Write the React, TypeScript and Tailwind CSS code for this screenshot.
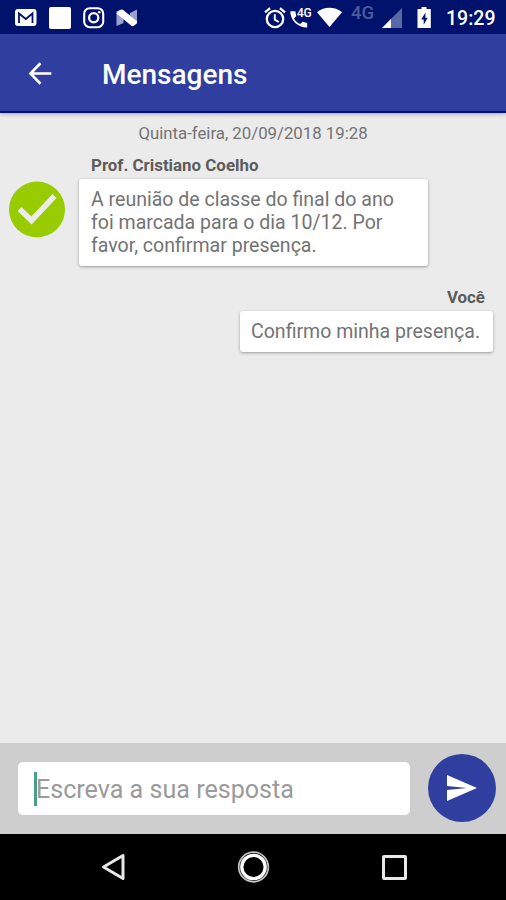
import type { ReactNode } from "react";

function NotificationIcons() {
  return (
    <div className="flex items-center">
      <svg className="h-[18px] w-[22px]" viewBox="0 0 22 18">
        <rect width="21.500" height="17" rx="3" fill="#fff" />
        <path d="M4 14V4.500l6.800 5.500 6.700-5.500V14" fill="none" stroke="#00126b" strokeWidth="1.800" />
      </svg>
      <div className="ml-3 h-[22px] w-[22px] rounded-xs bg-white" />
      <svg className="ml-3 h-[22px] w-[22px]" viewBox="0 0 22 22" fill="none" stroke="#fff">
        <rect x="1.200" y="1.200" width="19" height="19" rx="5.500" strokeWidth="2.100" />
        <circle cx="10.700" cy="10.700" r="4.600" strokeWidth="2.300" />
        <circle cx="16.200" cy="5.300" r="1.300" fill="#fff" stroke="none" />
      </svg>
      <svg className="ml-[11px] h-[18px] w-[22px]" viewBox="0 0 22 18">
        <path d="M.5 2v15l7-3V4zM14 4l7-3.500V15l-7-2z" fill="#9aa1cc" />
        <path d="M.5 4.500Q2 .8 6.500.5L21.300 12.500Q20 16.500 16 17.300z" fill="#fff" />
      </svg>
    </div>
  );
}

function SystemIcons() {
  return (
    <div className="flex items-start">
      <svg className="h-[22px] w-[22px]" viewBox="0 0 22 22" fill="none" stroke="#fff">
        <circle cx="11" cy="12" r="8.200" strokeWidth="2.300" />
        <path d="M1 5.400L6 1.100M21 5.400L16 1.100" strokeWidth="2.200" />
        <path d="M10.800 7.200v5.400l4 2.400" strokeWidth="1.900" />
      </svg>
      <div className="relative ml-[4px] h-[22px] w-[22px]">
        <svg className="h-[22px] w-[20px]" viewBox="0 0 20 22">
          <path
            d="M.3 4.300h5l1 4.800-2.300 2.300c1.600 3 3.700 4.700 6.200 5.600l2.300-2.200 4.700 1.200v4.500C8.500 20.800.3 14 .3 4.300z"
            fill="#fff"
          />
        </svg>
        <span className="absolute top-0 left-[7px] text-[12px] leading-[13px] font-medium tracking-[-0.3px]">
          4G
        </span>
      </div>
      <svg className="ml-[5px] h-[21px] w-[25px]" viewBox="0 0 26 21">
        <path d="M0 5C7.500-1.200 18.500-1.200 26 5L13 20.500z" fill="#fff" />
      </svg>
      <span className="ml-[9px] w-[26px] text-[18.5px] leading-[12px] font-medium text-[#4b5a9c]">
        4G
      </span>
      <svg className="ml-[5px] h-[21px] w-[21px]" viewBox="0 0 21 21">
        <path d="M20 1v20H0z" fill="#5968a6" />
        <path d="M9 12V21H0z" fill="#fff" />
      </svg>
      <svg className="ml-[14px] h-[22px] w-[15px]" viewBox="0 0 15 22">
        <path d="M4.500 0h5v2h4.300v19H.5V2h4z" fill="#fff" />
        <path d="M8.500 5.500l-4.300 7h2.500v5.200l4-7H8.300z" fill="#00126b" />
      </svg>
      <span className="ml-[14px] w-[50px] text-[19.5px] leading-[23px] font-medium whitespace-nowrap">
        19:29
      </span>
    </div>
  );
}

function Header() {
  return (
    <header className="relative z-10 text-white shadow-[0_1px_4px_rgba(0,0,0,0.3)]">
      <div className="flex h-[34px] justify-between bg-[#00126b] pt-[7px] pr-[10px] pl-[15px]">
        <div className="h-[22px]">
          <NotificationIcons />
        </div>
        <SystemIcons />
      </div>
      <div className="flex h-[79px] items-center border-b-2 border-[#0a0c86] bg-[#303f9f] pl-[28px]">
        <svg className="h-6 w-6" viewBox="0 0 24 24" fill="none" stroke="#fff" strokeWidth="2.700">
          <path d="M12.500 2.200L2.500 12.500l10 10.300M2.500 12.500H23.300" />
        </svg>
        <h1 className="mt-[5px] ml-[50px] text-[28px] leading-8 font-medium">Mensagens</h1>
      </div>
    </header>
  );
}

function Bubble({ children, className }: { children: ReactNode; className?: string }) {
  return (
    <div
      className={`rounded-[3px] bg-white px-3 text-[19.55px] leading-[23px] text-[#737373] shadow-[0_1px_3px_rgba(0,0,0,0.35)] ${className ?? ""}`}
    >
      {children}
    </div>
  );
}

function Messages() {
  return (
    <main className="flex-1 bg-[#ebebeb]">
      <p className="pt-[11px] pb-[2px] text-center text-[16.8px] leading-[18px] text-[#737373]">
        Quinta-feira, 20/09/2018 19:28
      </p>
      <div className="mt-3 flex pl-[9px]">
        <svg className="mt-[25px] h-[57px] w-14" viewBox="0 0 56 57">
          <circle cx="28" cy="28.500" r="28" fill="#99cc00" />
          <path d="M10.500 28L22.500 39.500 45.500 15" fill="none" stroke="#ebebeb" strokeWidth="5.500" />
        </svg>
        <div className="ml-[14px]">
          <p className="pl-3 text-[16.9px] leading-[18px] font-bold text-[#5c5c5c]">
            Prof. Cristiano Coelho
          </p>
          <Bubble className="mt-[5px] h-[87px] w-[349px] pt-[9px] whitespace-nowrap">
            A reunião de classe do final do ano
            <br />
            foi marcada para o dia 10/12. Por
            <br />
            favor, confirmar presença.
          </Bubble>
        </div>
      </div>
      <div className="mt-[22px] flex flex-col items-end pr-[13px]">
        <p className="pr-2 text-[16.9px] leading-[18px] font-bold text-[#5c5c5c]">Você</p>
        <Bubble className="mt-[5px] h-[41px] w-[253px] pt-[9px] pl-[11px] whitespace-nowrap">
          Confirmo minha presença.
        </Bubble>
      </div>
    </main>
  );
}

function ReplyBar() {
  return (
    <div className="flex h-[91px] items-center bg-[#cecece] pr-[10px] pl-[18px]">
      <div className="flex h-[53px] w-[392px] items-center rounded-[5px] bg-white pl-[16px]">
        <div className="-mr-[1px] h-[34px] w-[3px] bg-[#45a087]" />
        <span className="mt-[2px] text-[25.1px] leading-8 text-[#9a9a9a]">
          Escreva a sua resposta
        </span>
      </div>
      <button
        type="button"
        aria-label="Enviar"
        className="mt-[-2px] ml-[18px] flex h-[68px] w-[68px] items-center justify-center rounded-full bg-[#303f9f]"
      >
        <svg className="h-[26px] w-[30px]" viewBox="0 0 30 26">
          <path d="M0 0l30 13L0 26V15L20 13 0 11z" fill="#fff" />
        </svg>
      </button>
    </div>
  );
}

function NavigationBar() {
  return (
    <nav className="flex h-[66px] items-center bg-black pl-[101px]">
      <svg className="h-7 w-6" viewBox="0 0 24 28" fill="none" stroke="#e8e8e8" strokeWidth="3">
        <path d="M2.500 14L22 2.500v23z" strokeLinejoin="round" />
      </svg>
      <svg className="ml-[112px] h-[34px] w-[34px]" viewBox="0 0 34 34" fill="none">
        <circle cx="16.500" cy="17" r="14.800" stroke="#c0c0c0" strokeWidth="1.800" />
        <circle cx="16.500" cy="17" r="11.700" stroke="#fff" strokeWidth="3.300" />
      </svg>
      <div className="ml-[111px] h-[25px] w-[25px] rounded-xs border-[3px] border-[#e8e8e8]" />
    </nav>
  );
}

export default function App() {
  return (
    <div className="flex h-[900px] w-[506px] flex-col overflow-hidden font-['Roboto',sans-serif]">
      <Header />
      <Messages />
      <ReplyBar />
      <NavigationBar />
    </div>
  );
}
